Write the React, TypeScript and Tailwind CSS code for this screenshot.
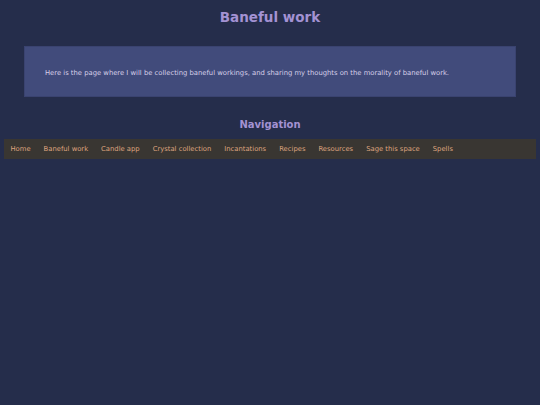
export default function App() {
  const links = ["Home", "Baneful work", "Candle app", "Crystal collection", "Incantations", "Recipes", "Resources", "Sage this space", "Spells"];
  return (
    <div className="w-[540px] h-[405px] bg-[#252d4b] overflow-hidden" style={{ fontFamily: '"DejaVu Sans", Verdana, sans-serif' }}>
      <h1 className="pt-[8px] h-[46px] text-center text-[13.5px] font-bold leading-[18px] text-[#a392d3]">Baneful work</h1>
      <div className="mx-[24px] h-[51px] bg-[#414b7b] border border-[#3a4370] flex items-center pl-[20px] pt-[3px]">
        <p className="text-[6.8px] text-[#d6cfe9] leading-[10px]">Here is the page where I will be collecting baneful workings, and sharing my thoughts on the morality of baneful work.</p>
      </div>
      <h2 className="mt-[21px] h-[21px] text-center text-[10px] font-bold leading-[14px] text-[#a392d3]">Navigation</h2>
      <nav className="mx-[4px] h-[20px] bg-[#393632] flex items-center">
        {links.map((l) => (
          <span key={l} className="px-[6.5px] text-[6.8px] leading-[10px] text-[#dea47f]">{l}</span>
        ))}
      </nav>
    </div>
  );
}
